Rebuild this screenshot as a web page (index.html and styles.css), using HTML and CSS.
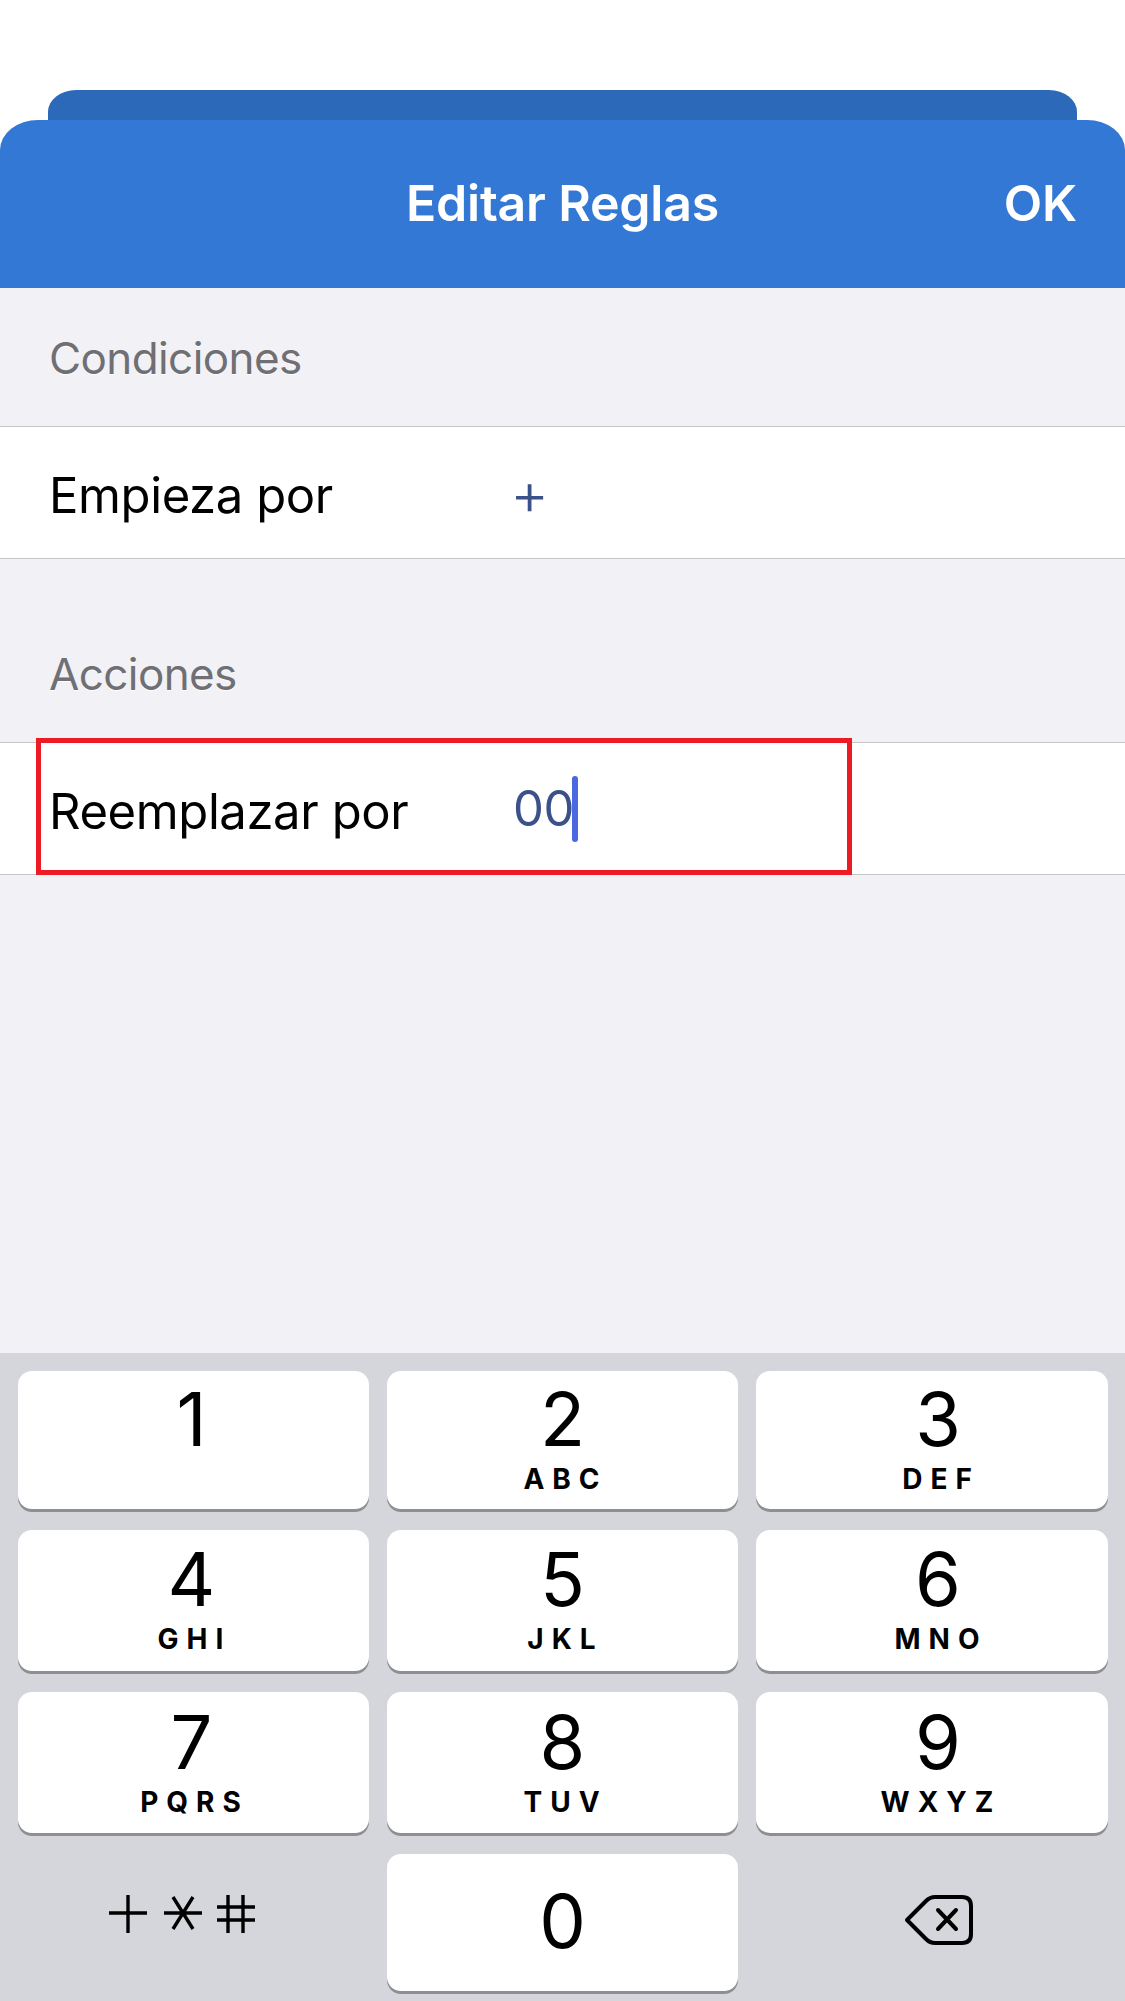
FILE: index.html
```html
<!DOCTYPE html>
<html lang="es">
<head>
    <meta charset="UTF-8">
    <meta name="viewport" content="width=device-width, initial-scale=1.0">
    <title>Editar Reglas</title>
    <link rel="stylesheet" href="styles.css">
</head>
<body>
    <!-- Card peeking out behind the sheet -->
    <div class="back-card"></div>

    <!-- Header -->
    <header class="sheet-header">
        <span class="sheet-title">Editar Reglas</span>
        <span class="sheet-ok">OK</span>
    </header>

    <!-- Rules form -->
    <main class="rules">
        <div class="section-label section-label-first">Condiciones</div>
        <div class="row">
            <span class="row-name">Empieza por</span>
            <span class="row-value row-value-plus">+</span>
        </div>

        <div class="section-label">Acciones</div>
        <div class="row">
            <span class="row-name">Reemplazar por</span>
            <span class="row-value">00<span class="caret"></span></span>
            <!-- Red annotation box -->
            <div class="highlight"></div>
        </div>
    </main>

    <!-- Numeric keyboard -->
    <section class="keyboard">
        <div class="key key-left"><span class="digit">1</span></div>
        <div class="key"><span class="digit">2</span><span class="letters">ABC</span></div>
        <div class="key key-right"><span class="digit">3</span><span class="letters">DEF</span></div>
        <div class="key key-left"><span class="digit">4</span><span class="letters">GHI</span></div>
        <div class="key"><span class="digit">5</span><span class="letters">JKL</span></div>
        <div class="key key-right"><span class="digit">6</span><span class="letters">MNO</span></div>
        <div class="key key-left"><span class="digit">7</span><span class="letters">PQRS</span></div>
        <div class="key"><span class="digit">8</span><span class="letters">TUV</span></div>
        <div class="key key-right"><span class="digit">9</span><span class="letters">WXYZ</span></div>
        <div class="key-plain key-symbols">
            <svg width="146" height="40" viewBox="0 0 146 40" fill="none" stroke="#000" stroke-width="3.4">
                <path d="M0 18H38M19 0V38"/>
                <path d="M55 18H93M64 2L84 34M84 2L64 34"/>
                <path d="M108 12H146M108 25H146M119 0V38M134 0V38"/>
            </svg>
        </div>
        <div class="key key-zero"><span class="digit">0</span></div>
        <div class="key-plain key-delete">
            <svg width="70" height="50" viewBox="0 0 70 50" fill="none" stroke="#000" stroke-width="4" stroke-linecap="round" stroke-linejoin="round">
                <path d="M3 25L22 6Q26 2 31 2H58Q67 2 67 11V39Q67 48 58 48H31Q26 48 22 44Z"/>
                <path d="M34 15L52 34M52 15L34 34"/>
            </svg>
        </div>
    </section>
</body>
</html>
```

FILE: styles.css
```css
/* Page */
body {
    display: flex;
    flex-direction: column;
    height: 2001px;
    margin: 0;
    overflow: hidden;
    background-color: white;
    font-family: 'Inter', 'Liberation Sans', sans-serif;
}

/* Darker card behind the header */
.back-card {
    flex: none;
    height: 30px;
    margin: 90px 48px 0;
    background-color: #2d69b9;
    border-radius: 28px 28px 0 0 / 22px 22px 0 0;
}

/* Header */
.sheet-header {
    flex: none;
    display: flex;
    justify-content: center;
    align-items: center;
    position: relative;
    height: 168px;
    padding-bottom: 2px;
    box-sizing: border-box;
    background-color: #3478d6;
    border-radius: 38px 38px 0 0 / 30px 30px 0 0;
    color: white;
    font-size: 50px;
    font-weight: 600;
    letter-spacing: -0.2px;
}

.sheet-ok {
    position: absolute;
    right: 48px;
}

/* Form area */
.rules {
    flex: 1;
    background-color: #f1f1f6;
}

.section-label {
    display: flex;
    align-items: center;
    height: 183px;
    padding: 46px 49px 0;
    box-sizing: border-box;
    color: #6f6f74;
    font-size: 44px;
    letter-spacing: -0.6px;
    text-shadow: 0 1px 0 white;
}

.section-label-first {
    height: 138px;
    padding-top: 2px;
}

.row {
    display: flex;
    align-items: center;
    position: relative;
    height: 133px;
    padding-left: 49px;
    box-sizing: border-box;
    background-color: white;
    border-top: 1px solid #c6c6c9;
    border-bottom: 1px solid #c6c6c9;
    font-size: 49px;
    letter-spacing: -0.4px;
}

.row-name {
    width: 464px;
    padding-top: 6px;
    color: black;
}

.row-value {
    display: flex;
    align-items: center;
    color: #3b5189;
}

.row-value-plus {
    margin-left: -3px;
    font-size: 60px;
    font-weight: 300;
}

.caret {
    width: 6px;
    height: 66px;
    margin-left: -2px;
    background-color: #4a68e0;
    border-radius: 3px;
}

.highlight {
    position: absolute;
    left: 36px;
    top: -5px;
    width: 816px;
    height: 137px;
    box-sizing: border-box;
    border: 5px solid #ed1c24;
}

/* Keyboard */
.keyboard {
    flex: none;
    display: grid;
    grid-template-columns: 351px 351px 352px;
    grid-template-rows: 138px 141px 141px 137px;
    gap: 21px 18px;
    height: 648px;
    padding: 18px 18px 0;
    box-sizing: border-box;
    background-color: #d5d6db;
}

.key {
    display: flex;
    flex-direction: column;
    align-items: center;
    box-sizing: border-box;
    background-color: white;
    border-radius: 14px;
    box-shadow: 0 3px 0 #8e8e93;
    color: black;
}

/* Glyphs sit a little off centre in the outer columns */
.key-left {
    padding-right: 4px;
}

.key-right {
    padding-left: 12px;
}

.key-plain {
    display: flex;
    justify-content: center;
    align-items: center;
}

.key-symbols {
    padding: 0 24px 16px 0;
}

.key-delete {
    padding: 0 0 6px 14px;
}

.digit {
    margin-top: 12px;
    font-size: 74px;
    line-height: 72px;
}

.key:nth-child(n+4) .digit {
    margin-top: 13px;
}

.key:nth-child(n+7) .digit {
    margin-top: 14px;
}

.letters {
    margin-top: 9px;
    padding-left: 6px;
    font-size: 28px;
    line-height: 30px;
    font-weight: 700;
    letter-spacing: 8px;
}

.key.key-zero .digit {
    margin-top: 31px;
}
```
